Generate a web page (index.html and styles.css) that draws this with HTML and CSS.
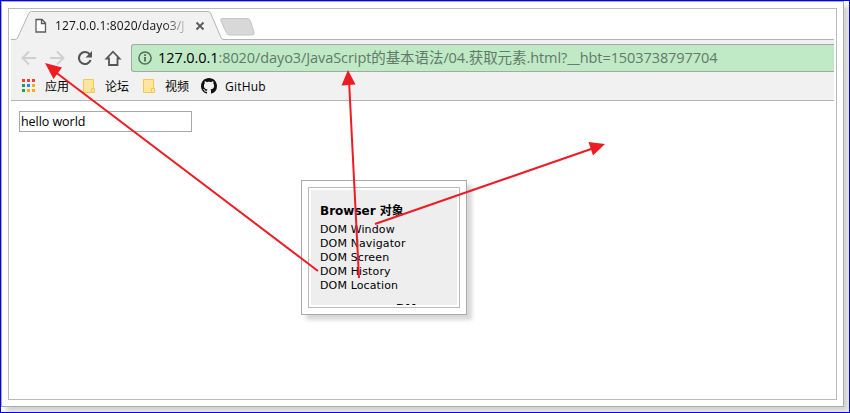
FILE: index.html
```
<!DOCTYPE html>
<html lang="zh-CN">
<head>
<meta charset="utf-8">
<title>Browser 对象</title>
<link rel="stylesheet" href="styles.css">
</head>
<body>
<div class="page">
<div class="frame">
<div class="frame-inner">
<div class="browser">
  <div class="tabs">
    <svg class="tab-shape" width="250" height="29" viewBox="0 0 250 29">
      <path d="M0 28.5H5.5L19.5 .5H198.5L211 28.5V29H0Z" fill="#f1f1f1"/>
      <path d="M0 28.5H4Q6 28.5 7 26L18 2Q19 .5 20.5 .5H197Q198.500 .5 199.500 2L210 26.500Q211 28.500 212 28.500" fill="none" stroke="#b5b5b5"/>
      <path d="M211 7.500H236Q238.500 7.500 239.500 10L243 21Q244 24 241 24H219Q216 24 215 21L210 10Q209 7.500 211 7.500Z" fill="#d8d8d8" stroke="#c6c6c6"/>
    </svg>
    <div class="tab">
      <svg width="12" height="16" viewBox="0 0 12 16"><path d="M1 1.500H7L10.500 5V14H1ZM6.500 1.500V5.500H10.500" fill="#fff" stroke="#5c5c5c" stroke-width="1.300"/></svg>
      <span class="tab-title">127.0.0.1:8020/dayo3/J</span>
      <svg class="close" width="10" height="10" viewBox="0 0 10 10"><path d="M1.500 1.500L8.500 8.500M8.500 1.500L1.500 8.500" stroke="#5a5a5a" stroke-width="1.800"/></svg>
    </div>
  </div>
  <div class="chrome">
    <div class="toolbar">
      <svg class="nav" width="120" height="28" viewBox="11 44 120 28">
        <g fill="none" stroke="#cfcfcf" stroke-width="1.900"><path d="M36 58H23M29 51.500L22.500 58L29 64.500M50 58H63M57 51.500L63.500 58L57 64.500"/></g>
        <path d="M89.800 54.500A6 6 0 1 0 90.600 60" fill="none" stroke="#555" stroke-width="2.100"/>
        <path d="M92 51V57.500H85.500Z" fill="#555"/>
        <path d="M106.500 58.500L113 51.700L119.500 58.500H117.500V65H109V58.500Z" fill="none" stroke="#555" stroke-width="1.800"/>
      </svg>
      <div class="address">
        <svg width="14" height="14" viewBox="0 0 14 14"><circle cx="7" cy="7" r="6.100" fill="none" stroke="#566b59" stroke-width="1.500"/><path d="M7 6V10.500M7 3.300V5" stroke="#566b59" stroke-width="1.800"/></svg>
        <span class="url"><b>127.0.0.1</b>:8020/dayo3/JavaScript的基本语法/04.获取元素.html?__hbt=1503738797704</span>
      </div>
    </div>
    <div class="bookmarks">
      <svg class="apps" width="13" height="13" viewBox="0 0 13 13"><path d="M0 0h3v3H0zM5 0h3v3H5zM10 0h3v3h-3z" fill="#ea4335"/><path d="M0 5h3v3H0zM0 10h3v3H0z" fill="#279b57"/><path d="M5 5h3v3H5z" fill="#2489f5"/><path d="M10 5h3v3h-3zM5 10h3v3H5zM10 10h3v3h-3z" fill="#f8ae13"/></svg>
      <span class="mark m-apps">应用</span>
      <svg width="13" height="14" viewBox="0 0 13 14"><path d="M.5 .5H10.500V9.500H11.500V13.500H.5Z" fill="#ffe69a" stroke="#edca55"/><path d="M8.500 13V9.500H11" fill="none" stroke="#edca55"/></svg>
      <span class="mark m-forum">论坛</span>
      <svg width="13" height="14" viewBox="0 0 13 14"><path d="M.5 .5H10.500V9.500H11.500V13.500H.5Z" fill="#ffe69a" stroke="#edca55"/><path d="M8.500 13V9.500H11" fill="none" stroke="#edca55"/></svg>
      <span class="mark m-video">视频</span>
      <svg width="16" height="16" viewBox="0 0 16 16"><path fill="#111" d="M8 0C3.580 0 0 3.580 0 8c0 3.540 2.290 6.530 5.470 7.590.4.070.55-.17.55-.38 0-.19-.01-.82-.01-1.490-2.010.37-2.530-.49-2.690-.94-.09-.23-.48-.94-.82-1.130-.28-.15-.68-.52-.01-.53.63-.01 1.080.58 1.230.82.72 1.210 1.870.87 2.330.66.07-.52.28-.87.51-1.070-1.780-.2-3.640-.89-3.640-3.950 0-.87.31-1.590.82-2.150-.08-.2-.36-1.020.08-2.120 0 0 .67-.21 2.200.82.640-.18 1.320-.27 2-.27s1.360.09 2 .27c1.530-1.040 2.200-.82 2.200-.82.440 1.100.16 1.920.08 2.120.51.560.82 1.270.82 2.150 0 3.070-1.870 3.750-3.650 3.950.29.25.54.73.54 1.480 0 1.070-.01 1.930-.01 2.200 0 .21.15.46.55.38A8.010 8.010 0 0 0 16 8c0-4.420-3.580-8-8-8z"/></svg>
      <span class="mark m-git">GitHub</span>
    </div>
  </div>
  <div class="content"><div class="field">hello world</div></div>
</div>
</div>
</div>
<div class="popup">
  <div class="popup-inner">
    <div class="panel">
      <h2>Browser 对象</h2>
      <ul><li>DOM Window</li><li>DOM Navigator</li><li>DOM Screen</li><li>DOM History</li><li>DOM Location</li></ul>
      <div class="cut">DM</div>
    </div>
  </div>
</div>
<svg class="arrows" width="850" height="413" viewBox="0 0 850 413">
  <g stroke="#ed1c24" stroke-width="2"><path d="M318 271L54 71M359 278L349 80M375 224L594 148"/></g>
  <g fill="#ed1c24"><path d="M45 63L62 67.500L53.500 79ZM348 70L355.500 84.500L341.500 85.500ZM605 144L593 155.500L588.500 142Z"/></g>
</svg>
</div>
</body>
</html>
```
FILE: styles.css
```
* { box-sizing: border-box; }
body { margin: 0; background: #fff; color: #000; font-family: "Open Sans", "Noto Sans CJK SC", sans-serif; }
.page { position: relative; width: 850px; height: 413px; border: 1px solid #00f; overflow: hidden; }
.frame { width: 843px; height: 406px; padding: 6px; border: 1px solid #aaa; background: #fff; box-shadow: 5px 5px 5px #d3d3d3; }
.frame-inner { width: 829px; height: 392px; padding: 2px; border: 1px solid #bbb; }
.browser { width: 823px; }
.tabs { position: relative; height: 29px; background: linear-gradient(#b5b5b5, #b5b5b5) 212px 28px / 611px 1px no-repeat; }
.tab-shape { position: absolute; left: 0; top: 0; }
.tab { position: relative; display: flex; align-items: center; height: 29px; padding-left: 24px; }
.tab-title { width: 132px; margin-left: 8px; white-space: nowrap; font-size: 12px; letter-spacing: .1px; line-height: 18px; color: #111; -webkit-mask-image: linear-gradient(90deg, #000 108px, transparent 136px); }
.close { margin-left: 8px; }
.chrome { height: 61px; padding-top: 4px; background: #f1f1f1; border-bottom: 1px solid #b5b5b5; }
.toolbar { display: flex; height: 28px; }
.nav { flex: none; }
.address { display: flex; align-items: center; flex: 1; padding-left: 6px; border: 1px solid #a2aaa3; border-right: 0; border-radius: 3px 0 0 3px; background: #c0eac6; }
.url { margin-left: 6px; white-space: nowrap; font-size: 14.500px; letter-spacing: -.08px; line-height: 20px; color: #62796a; }
.url b { font-weight: 400; color: #000; }
.bookmarks { display: flex; align-items: center; height: 28px; padding-left: 11px; font-size: 12px; }
.apps { margin-top: -1px; }
.mark { padding-top: 1px; line-height: 18px; white-space: nowrap; }
.m-apps { width: 38px; margin-left: 10px; }
.m-forum, .m-video { margin-left: 9px; }
.m-forum { width: 38px; }
.m-video { width: 36px; }
.m-git { margin-left: 8px; letter-spacing: .2px; }
.content { padding: 10px 8px; }
.field { width: 173px; height: 21px; padding-left: 1px; border: 1px solid #a9a9a9; font-size: 12.500px; letter-spacing: -.05px; line-height: 19px; }
.popup { position: absolute; left: 300px; top: 179px; width: 166px; height: 135px; padding: 6px; border: 1px solid #aaa; background: #fff; box-shadow: 5px 5px 4px #d8d8d8; }
.popup-inner { width: 152px; height: 121px; padding: 2px; border: 1px solid #bbb; }
.panel { width: 146px; height: 115px; padding: 14px 0 0 9px; overflow: hidden; background: #eee; font: 11px/14px "DejaVu Sans", "Noto Sans CJK SC", sans-serif; letter-spacing: .13px; }
h2 { margin: 0 0 4px; font-size: 12px; letter-spacing: 0; line-height: 15px; }
ul { margin: 0; padding: 0; list-style: none; }
.cut { margin: 9px 0 0 76px; font-weight: 700; }
.arrows { position: absolute; left: -1px; top: -1px; }
```
